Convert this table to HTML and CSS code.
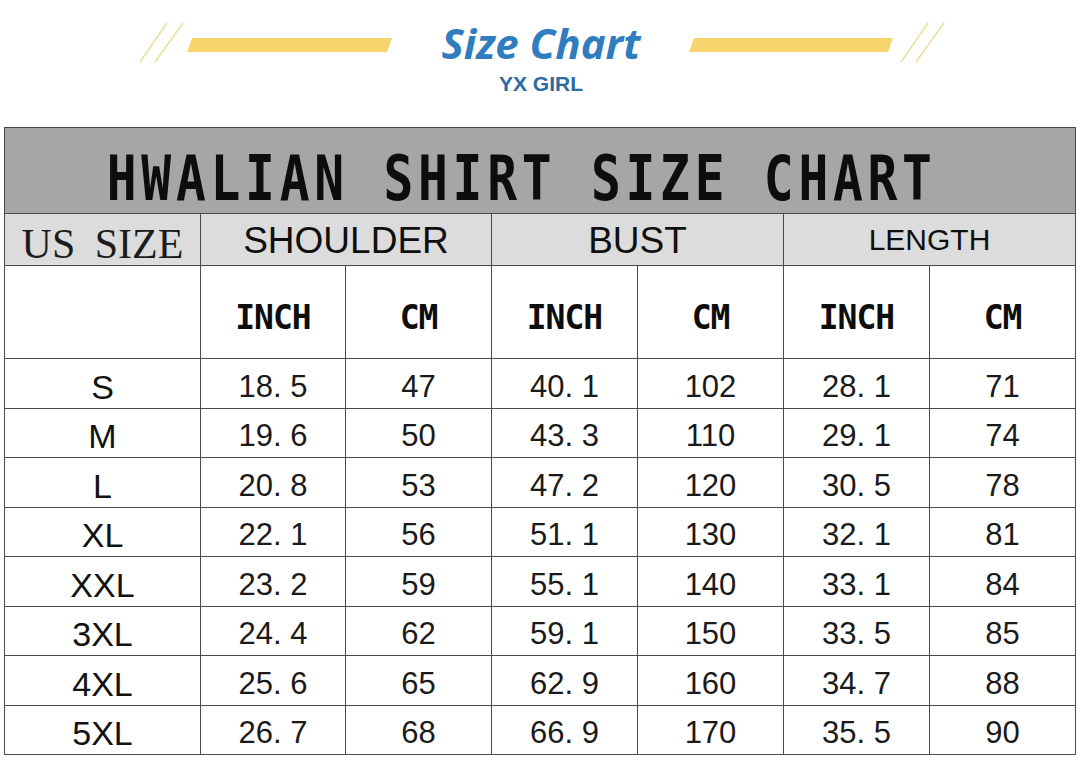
FILE: index.html
```html
<!DOCTYPE html>
<html lang="en">
<head>
<meta charset="utf-8">
<title>Size Chart</title>
<link rel="stylesheet" href="styles.css">
</head>
<body>
<header class="banner">
  <svg class="deco" width="256" height="46" viewBox="0 0 256 46">
    <line x1="2" y1="42" x2="29" y2="3" stroke="#efdf9f" stroke-width="1.6"/>
    <line x1="17" y1="42" x2="45" y2="3" stroke="#efdf9f" stroke-width="1.6"/>
    <polygon points="49,32 54,18 254,18 249,32" fill="#f7d46c"/>
  </svg>
  <div class="brand">
    <div class="brand-title">Size Chart</div>
    <div class="brand-sub">YX GIRL</div>
  </div>
  <svg class="deco deco-right" width="262" height="46" viewBox="0 0 262 46">
    <polygon points="3,32 8,18 207,18 202,32" fill="#f7d46c"/>
    <line x1="215" y1="42" x2="242" y2="3" stroke="#efdf9f" stroke-width="1.6"/>
    <line x1="230" y1="42" x2="258" y2="3" stroke="#efdf9f" stroke-width="1.6"/>
  </svg>
</header>

<main class="chart">
  <div class="cell title"><span class="title-text">HWALIAN SHIRT SIZE CHART</span></div>

  <div class="cell head us">US SIZE</div>
  <div class="cell head span2 group">SHOULDER</div>
  <div class="cell head span2 group">BUST</div>
  <div class="cell head span2 group small">LENGTH</div>

  <div class="cell"></div>
  <div class="cell unit">INCH</div>
  <div class="cell unit">CM</div>
  <div class="cell unit">INCH</div>
  <div class="cell unit">CM</div>
  <div class="cell unit">INCH</div>
  <div class="cell unit">CM</div>

  <div class="cell size">S</div><div class="cell val">18. 5</div><div class="cell val">47</div><div class="cell val">40. 1</div><div class="cell val">102</div><div class="cell val">28. 1</div><div class="cell val">71</div>
  <div class="cell size">M</div><div class="cell val">19. 6</div><div class="cell val">50</div><div class="cell val">43. 3</div><div class="cell val">110</div><div class="cell val">29. 1</div><div class="cell val">74</div>
  <div class="cell size">L</div><div class="cell val">20. 8</div><div class="cell val">53</div><div class="cell val">47. 2</div><div class="cell val">120</div><div class="cell val">30. 5</div><div class="cell val">78</div>
  <div class="cell size">XL</div><div class="cell val">22. 1</div><div class="cell val">56</div><div class="cell val">51. 1</div><div class="cell val">130</div><div class="cell val">32. 1</div><div class="cell val">81</div>
  <div class="cell size">XXL</div><div class="cell val">23. 2</div><div class="cell val">59</div><div class="cell val">55. 1</div><div class="cell val">140</div><div class="cell val">33. 1</div><div class="cell val">84</div>
  <div class="cell size">3XL</div><div class="cell val">24. 4</div><div class="cell val">62</div><div class="cell val">59. 1</div><div class="cell val">150</div><div class="cell val">33. 5</div><div class="cell val">85</div>
  <div class="cell size">4XL</div><div class="cell val">25. 6</div><div class="cell val">65</div><div class="cell val">62. 9</div><div class="cell val">160</div><div class="cell val">34. 7</div><div class="cell val">88</div>
  <div class="cell size">5XL</div><div class="cell val">26. 7</div><div class="cell val">68</div><div class="cell val">66. 9</div><div class="cell val">170</div><div class="cell val">35. 5</div><div class="cell val">90</div>
</main>
</body>
</html>
```

FILE: styles.css
```css
html, body {
  margin: 0;
  padding: 0;
  background: #ffffff;
}

body {
  width: 1079px;
  height: 777px;
  overflow: hidden;
  font-family: "Liberation Sans", Arial, sans-serif;
  color: #111111;
}

/* ---------- banner ---------- */
.banner {
  display: flex;
  align-items: flex-start;
  height: 127px;
  box-sizing: border-box;
  padding-left: 138px;
}

.deco {
  flex: none;
  margin-top: 20px;
}

.deco-right {
  margin-left: 44px;
}

.brand {
  flex: none;
  width: 202px;
  margin-left: 46px;
  margin-top: 22px;
  display: flex;
  flex-direction: column;
  align-items: center;
}

.brand-title {
  font-family: "Open Sans", "DejaVu Sans", sans-serif;
  font-weight: 700;
  font-size: 42px;
  line-height: 42px;
  font-style: italic;
  letter-spacing: 0;
  color: #2f7dbe;
  white-space: nowrap;
}

.brand-sub {
  margin-top: 9px;
  font-family: "Liberation Sans", Arial, sans-serif;
  font-weight: 700;
  font-size: 21px;
  line-height: 21px;
  color: #2b6ba2;
  white-space: nowrap;
}

/* ---------- chart ---------- */
.chart {
  display: grid;
  width: 1071px;
  margin-left: 4px;
  grid-template-columns: 196px 145px repeat(5, 146px);
  grid-template-rows: 86px 52px 93px 50px 49px 50px 49px 50px 49px 50px 49px;
  border-left: 1px solid #4a4a4a;
  border-top: 1px solid #4a4a4a;
}

.cell {
  box-sizing: border-box;
  display: flex;
  align-items: center;
  justify-content: center;
  border-right: 1px solid #4a4a4a;
  border-bottom: 1px solid #4a4a4a;
  line-height: 1;
  white-space: nowrap;
}

.title {
  grid-column: 1 / -1;
  background: #a6a6a6;
  padding-top: 16px;
  padding-right: 36px;
}

.title-text {
  display: inline-block;
  font-family: "DejaVu Sans Mono", "Liberation Mono", monospace;
  font-weight: 700;
  font-size: 62px;
  letter-spacing: 5.9px;
  color: #0d0d0d;
  transform: scaleX(0.8);
}

.head {
  background: #dcdcdc;
}

.span2 {
  grid-column: span 2;
}

.us {
  font-family: "Liberation Serif", "Times New Roman", serif;
  font-size: 42px;
  word-spacing: 9px;
  padding-top: 9px;
  color: #1c1c1c;
}

.group {
  font-size: 37px;
  padding-top: 1px;
  color: #0f0f0f;
}

.group.small {
  font-size: 30px;
  padding-top: 0;
}

.unit {
  font-family: "DejaVu Sans Mono", "Liberation Mono", monospace;
  font-weight: 700;
  font-size: 33px;
  letter-spacing: -1px;
  padding-top: 10px;
  color: #0d0d0d;
}

.size {
  font-size: 34px;
  padding-top: 6px;
  color: #111111;
}

.val {
  font-size: 31px;
  padding-top: 5px;
  color: #1a1a1a;
}
```
